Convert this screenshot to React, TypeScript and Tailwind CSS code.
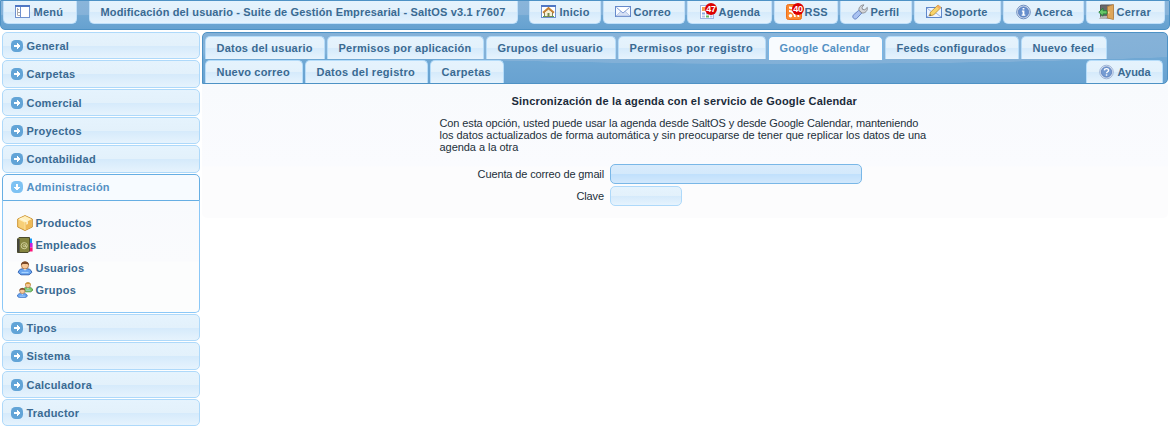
import type { ReactNode } from "react";

const glossLight =
  "bg-[linear-gradient(to_bottom,#e5f3fd_0,#e3f1fb_50%,#d5eafb_51%,#e6f3fd_100%)]";

function Svg({ children, className = "" }: { children: ReactNode; className?: string }) {
  return (
    <svg viewBox="0 0 16 16" className={`h-4 w-4 shrink-0 ${className}`} aria-hidden="true">
      {children}
    </svg>
  );
}

const Frame = ({ children, h = 12 }: { children?: ReactNode; h?: number }) => (
  <>
    <rect x=".5" y="1.5" width="14" height={h} fill="#fff" stroke="#6f91cf" />
    {children}
  </>
);

const MenuIcon = () => (
  <Svg>
    <Frame>
      <path d="M0 2h15" stroke="#4f77c4" strokeWidth="2" />
      <path d="M5.5 3v10" stroke="#6f91cf" />
      <path d="M2.5 4v7.5M2.5 5.5H4M3 8.5h2M3 11.5h2" stroke="#aaa" fill="none" />
    </Frame>
  </Svg>
);
const HomeIcon = () => (
  <Svg>
    <Frame>
      <path d="M0 2h15" stroke="#4f77c4" strokeWidth="2" />
      <path d="M3.5 8 7.5 5l4 3v4.5h-8z" fill="#f7f1d5" stroke="#888059" />
      <path d="M2 8.7 7.5 4 13 8.7" fill="none" stroke="#c78335" strokeWidth="1.8" />
      <path d="M6.5 9h2v4h-2z" fill="#768c4c" />
      <path d="M2 12.5h3M10 12.5h3" stroke="#5b9e4b" />
    </Frame>
  </Svg>
);
const MailIcon = () => (
  <Svg>
    <rect x=".5" y="2.5" width="15" height="10" fill="#f7faff" stroke="#6589cb" />
    <path d="m1 12 5.2-5L8 8.5 9.8 7l5.2 5z" fill="#d7e1f5" stroke="#9fb3db" strokeWidth=".7" />
    <path d="m1.5 3.5 6.5 5.5 6.5-5.5" fill="#fff" stroke="#819cd5" />
  </Svg>
);
const CalendarIcon = () => (
  <Svg>
    <rect x=".5" y="1.5" width="13" height="13" fill="#fff" stroke="#9fb4e0" />
    <path d="M2 3h3.5v4H2z" fill="#f59b51" />
    <path d="M2 9.5h3M6 9.5h3M10 9.5h2.5" stroke="#8ba8dd" strokeWidth="2" />
    <path d="M6 6h3M10 6h2.5M2 12.5h3M10 12.5h2.5" stroke="#b5c6e9" strokeWidth="2" />
    <path d="M6 12.5h3" stroke="#61b868" strokeWidth="2" />
  </Svg>
);
const RssIcon = () => (
  <Svg>
    <rect x=".5" y=".5" width="15" height="15" rx="2" fill="#fb8a30" stroke="#f0701a" />
    <circle cx="4.5" cy="11.7" r="1.8" fill="#fff" />
    <path d="M3 7a6 6 0 0 1 6 6M3 3.5a9.5 9.5 0 0 1 9.5 9.5" stroke="#fff" strokeWidth="1.8" fill="none" />
  </Svg>
);
const WrenchIcon = () => (
  <Svg>
    <path d="M1.2 11.2 6.8 6.2l3 2.8-5.3 5.7c-2.1 1.3-4.7-1.2-3.3-3.5z" fill="#a9c2f1" stroke="#6787c7" />
    <path d="M7 6.2C6.5 3.5 8.8.8 12 .9L10 3.2l.5 2.2 2.3.4 2.5-2.4c.6 3.2-2.1 6-5.3 5.6z" fill="#d4d6d9" stroke="#8d9197" />
  </Svg>
);
const EditMailIcon = () => (
  <Svg>
    <rect x=".5" y="3.5" width="15" height="10" fill="#edf4ff" stroke="#5f87cb" />
    <path d="m1 13 5-4h4l5 4M1 4l6 5" stroke="#9eb7df" fill="none" />
    <path d="m3.5 11.8 1-3.6L12 1l3 2.5-7.5 7.5z" fill="#f8d46c" stroke="#bd8b27" strokeWidth=".8" />
    <path d="m10.5 2.5 3 2.7L15 3.5 12 1z" fill="#f6ab63" />
    <path d="m3.5 11.8.5-1.6 1.3 1.1z" fill="#443" />
  </Svg>
);
const RoundIcon = ({ help = false }: { help?: boolean }) => (
  <Svg>
    <circle cx="7.5" cy="8" r="6.8" fill="#dce6f5" stroke={help ? "#9ab0d3" : "#6485b9"} strokeWidth=".9" />
    <circle cx="7.5" cy="8" r="5.2" fill={help ? "#759bd2" : "#668fce"} stroke="#5479b6" strokeWidth=".7" />
    {help ? (
      <>
        <path d="M5.4 6.4c.1-2.5 4.2-2.3 4.2 0 0 1.4-2 1.3-2 2.8" fill="none" stroke="#fff" strokeWidth="1.4" />
        <path d="M6.8 10.3h1.5v1.4H6.8z" fill="#fff" />
      </>
    ) : (
      <path d="M6.6 4h1.8v1.6H6.6zM5.9 6.6h2.5v4h.9v1.2H5.7v-1.2h.9V7.8h-.7z" fill="#fff" />
    )}
  </Svg>
);
const ExitIcon = () => (
  <Svg>
    <path d="M2.5 1h12.5v13H2.5z" fill="#68676a" stroke="#57575b" />
    <path d="M3 12h7l-2 3H1z" fill="#b5b5b5" />
    <path d="M9.5 2.5 15.5.5v15l-6-1.5z" fill="#dda65a" stroke="#b57e3c" strokeWidth=".8" />
    <path d="M10.8 7.5v2" stroke="#fff3bd" />
    <path d="M.8 8.2 5 4.2v2.5h4v3.2H5v2.3z" fill="#68c667" stroke="#25803a" strokeWidth=".9" />
  </Svg>
);
const BoxIcon = () => (
  <Svg>
    <path d="M8 .6 15.3 4v8L8 15.5.7 12V4z" fill="#f7cf77" stroke="#cd9433" />
    <path d="m1.2 4.2 6.8 3.5 6.8-3.5L8 1z" fill="#fff0bd" />
    <path d="M8 7.7v7.2l6.7-3.1V4.3z" fill="#efb957" />
    <path d="m4 2.7 7 3.5V9l-1.8.8V7L2.5 3.6z" fill="#fff9dd" opacity=".8" />
    <path d="M8 7.5V15" stroke="#fbe2a0" />
  </Svg>
);
const AddressBookIcon = () => (
  <Svg>
    <path d="M12 1.5h3v4.5h-3z" fill="#1698f8" />
    <path d="M12 6h3.6v4.5H12z" fill="#c721e0" />
    <path d="M12 10.5h3.6v4H12z" fill="#fb1479" />
    <path d="M.5 2 2 .5h10.5V14L11 15.5H.5z" fill="#85853f" stroke="#4a4b2d" />
    <path d="M1.6 2v13" stroke="#454540" strokeWidth="2" />
    <circle cx="7.2" cy="8.7" r="3.1" fill="none" stroke="#d7d6a2" strokeWidth=".9" />
    <circle cx="7.2" cy="8.7" r="1.1" fill="none" stroke="#d7d6a2" strokeWidth=".8" />
    <path d="M8.5 7.5v2.2H10" fill="none" stroke="#d7d6a2" strokeWidth=".8" />
  </Svg>
);
const Person = ({ hair = "#7b4927", shirt = "#68a5f0", edge = "#2b5eaf" }) => (
  <>
    <path d="M1.2 12.5C1.5 9.6 4 8.5 8 8.5s6.5 1.1 6.8 4L12 14.8H4z" fill={shirt} stroke={edge} strokeWidth=".9" />
    <path d="M4.5 12.5h7" stroke="#a8d4ff" strokeWidth="1.2" fill="none" />
    <path d="M6.3 9 8 10.6 9.7 9z" fill="#fff" />
    <circle cx="8" cy="5.4" r="3.6" fill="#f7c898" stroke="#98613a" strokeWidth=".7" />
    <path d="M4 5.6C3.3 0 12.7 0 12 5.6L10.5 4h-5z" fill={hair} />
  </>
);
const UserIcon = () => (
  <Svg>
    <Person />
  </Svg>
);
const GroupIcon = () => (
  <Svg>
    <g transform="translate(5.2 -.8) scale(.72)">
      <Person hair="#d09a34" shirt="#7cc763" edge="#36822f" />
    </g>
    <g transform="translate(-.6 4.9) scale(.74)">
      <Person />
    </g>
  </Svg>
);

function Arrow({ down = false }: { down?: boolean }) {
  return (
    <svg viewBox="0 0 12 12" className="h-3 w-3 shrink-0" aria-hidden="true">
      <rect width="12" height="12" rx="4.5" fill={down ? "#7ec2f3" : "#62a4d7"} />
      <path
        d="M3 5h3V3h1v1h1v1h1v2H8v1H7v1H6V7H3z"
        fill="#fff"
        transform={down ? "rotate(90 6 6)" : undefined}
      />
    </svg>
  );
}

type BarItem = { label: string; box: string; icon: ReactNode; badge?: string };

const actions: BarItem[] = [
  { label: "Inicio", box: "w-[72px] pl-[11px]", icon: <HomeIcon /> },
  { label: "Correo", box: "w-[82px] pl-[11px]", icon: <MailIcon /> },
  { label: "Agenda", box: "w-[85px] pl-3", icon: <CalendarIcon />, badge: "47" },
  { label: "RSS", box: "w-[64px] pl-[11px]", icon: <RssIcon />, badge: "40" },
  { label: "Perfil", box: "w-[72px] pl-[11px]", icon: <WrenchIcon /> },
  { label: "Soporte", box: "w-[87px] pl-[11px]", icon: <EditMailIcon /> },
  { label: "Acerca", box: "w-[81px] pl-3", icon: <RoundIcon /> },
  { label: "Cerrar", box: "w-[79px] pl-[11px]", icon: <ExitIcon /> },
];

function BarButton({ label, box, icon, badge }: BarItem) {
  return (
    <button
      className={`relative flex h-[23px] shrink-0 items-center gap-[2.5px] rounded-b-[5px] border border-t-0 border-[#c0e0fa] text-left ${glossLight} ${box}`}
    >
      {icon}
      <span>{label}</span>
      {badge && (
        <span className="absolute top-[2px] left-[17px] flex h-3 w-3 items-center justify-center rounded-full bg-[#dc0000] text-[9px] leading-none tracking-[-0.2px] text-white">
          {badge}
        </span>
      )}
    </button>
  );
}

type TabItem = { label: string; box: string; active?: boolean };

const firstRow: TabItem[] = [
  { label: "Datos del usuario", box: "w-[120px]" },
  { label: "Permisos por aplicación", box: "w-[157px] tracking-[0.25px]" },
  { label: "Grupos del usuario", box: "w-[130px] tracking-[0.25px]" },
  { label: "Permisos por registro", box: "w-[148px] tracking-[0.45px]" },
  { label: "Google Calendar", box: "w-[115px] tracking-[0.17px]", active: true },
  { label: "Feeds configurados", box: "w-[134px] tracking-[0.28px]" },
  { label: "Nuevo feed", box: "w-[86px] tracking-[0.25px]" },
];
const secondRow: TabItem[] = [
  { label: "Nuevo correo", box: "w-[98px] tracking-[0.2px]" },
  { label: "Datos del registro", box: "w-[123px] tracking-[0.28px]" },
  { label: "Carpetas", box: "w-[74px] tracking-[0.3px]" },
];

function Tab({ label, box, active }: TabItem) {
  return (
    <button
      className={`shrink-0 rounded-t-[5px] border border-b-0 pl-[10.5px] text-left ${box} ${
        active
          ? "h-6 border-[#79b7e7] bg-[#f8fbfe] pb-px text-[#5491c4]"
          : `h-[23px] border-[#b5dcf9] ${glossLight}`
      }`}
    >
      {label}
    </button>
  );
}

type Section = { label: string; height: string };

const upper: Section[] = [
  { label: "General", height: "h-[27px]" },
  { label: "Carpetas", height: "h-[28px]" },
  { label: "Comercial", height: "h-[27px]" },
  { label: "Proyectos", height: "h-[27px]" },
  { label: "Contabilidad", height: "h-[28px]" },
];
const lower: Section[] = [
  { label: "Tipos", height: "h-[27px]" },
  { label: "Sistema", height: "h-[28px]" },
  { label: "Calculadora", height: "h-[27px]" },
  { label: "Traductor", height: "h-[27px]" },
];

function AccordionHeader({ label, height }: Section) {
  return (
    <button
      className={`flex w-full shrink-0 items-center gap-[3.5px] rounded-[5px] border border-[#aed9fa] pl-2 text-left ${height} ${glossLight}`}
    >
      <Arrow />
      <span>{label}</span>
    </button>
  );
}

const adminLinks = [
  { label: "Productos", icon: <BoxIcon />, height: "h-[22px]" },
  { label: "Empleados", icon: <AddressBookIcon />, height: "h-[22px]" },
  { label: "Usuarios", icon: <UserIcon />, height: "h-[23px]" },
  { label: "Grupos", icon: <GroupIcon />, height: "h-[22px]" },
];

export default function App() {
  return (
    <div className="flex h-[442px] w-[1170px] flex-col overflow-hidden bg-white font-['Liberation_Sans',Arial,sans-serif] text-[11px] leading-[12px] font-bold tracking-[0.23px] whitespace-nowrap text-[#3a6a92]">
      <header className="flex h-[30px] shrink-0 rounded-b-[5px] border border-[#4e92c5] bg-[linear-gradient(to_bottom,#8ab5da_0,#85b2d9_48%,#70a8d4_52%,#66a1d0_100%)] pl-[2px]">
        <BarButton label="Menú" box="w-[74px] pl-[11px]" icon={<MenuIcon />} />
        <h1
          className={`mr-[11px] ml-3 flex h-[23px] w-[429px] items-center rounded-b-[5px] border border-t-0 border-[#c0e0fa] pl-[10.5px] tracking-[0.15px] ${glossLight}`}
        >
          Modificación del usuario - Suite de Gestión Empresarial - SaltOS v3.1 r7607
        </h1>
        <nav className="flex gap-[2px]">
          {actions.map((a) => (
            <BarButton key={a.label} {...a} />
          ))}
        </nav>
      </header>

      <div className="flex flex-1 gap-[2px] pt-[2px] pl-[2px]">
        <aside className="flex w-[198px] flex-col gap-px">
          {upper.map((s) => (
            <AccordionHeader key={s.label} {...s} />
          ))}
          <section className="flex h-[139px] shrink-0 flex-col">
            <button className="flex h-[27px] items-center gap-[3.5px] rounded-t-[5px] border border-[#66aee3] bg-[#f7fbff] pb-px pl-2 text-left text-[#5491c4]">
              <Arrow down />
              <span>Administración</span>
            </button>
            <ul className="flex-1 rounded-b-[5px] border border-t-0 border-[#8bc8f7] bg-[linear-gradient(to_bottom,#f8fafd_0,#fafbfd_54%,#fcfdfd_55%)] pt-[11px] pl-[14px]">
              {adminLinks.map((l) => (
                <li key={l.label} className={`flex items-center gap-[2.5px] ${l.height}`}>
                  {l.icon}
                  <span>{l.label}</span>
                </li>
              ))}
            </ul>
          </section>
          {lower.map((s) => (
            <AccordionHeader key={s.label} {...s} />
          ))}
        </aside>

        <main className="w-[966px]">
          <div className="flex h-[52px] flex-col rounded-[5px] rounded-bl-none border border-[#4e92c5] bg-[radial-gradient(ellipse_620px_31px_at_60%_0,#8ab5da_0,#82b0d7_99%,transparent_100%),linear-gradient(to_bottom,#8ab5da_0,#80b0d8_40%,#70a8d4_50%,#68a2d1_100%)] pt-[3px] pl-[2px]">
            <div className="flex h-6 gap-[2px]">
              {firstRow.map((t) => (
                <Tab key={t.label} {...t} />
              ))}
            </div>
            <div className="flex gap-[2px]">
              {secondRow.map((t) => (
                <Tab key={t.label} {...t} />
              ))}
              <button
                className={`mr-1 ml-auto flex h-[23px] w-[77px] items-center gap-[2.5px] rounded-t-[5px] border border-b-0 border-[#b5dcf9] pl-3 tracking-normal ${glossLight}`}
              >
                <RoundIcon help />
                <span>Ayuda</span>
              </button>
            </div>
          </div>

          <section className="h-[134px] rounded-b-[5px] bg-[linear-gradient(to_bottom,#f8fafd_0,#fafbfe_61%,#fcfcfd_62%)] pt-[11px] font-normal text-[#222f3a]">
            <h2 className="pl-[309.5px] font-bold tracking-[0.18px] text-[#1b2b3a]">
              Sincronización de la agenda con el servicio de Google Calendar
            </h2>
            <p className="mt-[10px] flex flex-col pl-[237.5px]">
              <span className="tracking-[-0.12px]">
                Con esta opción, usted puede usar la agenda desde SaltOS y desde Google Calendar, manteniendo
              </span>
              <span className="tracking-[-0.025px]">
                los datos actualizados de forma automática y sin preocuparse de tener que replicar los datos de una
              </span>
              <span className="tracking-[-0.05px]">agenda a la otra</span>
            </p>
            <form className="mt-[11px] grid grid-cols-[402px_auto] items-center gap-x-[6px] gap-y-[2px]">
              <label htmlFor="account" className="text-right tracking-[-0.13px]">
                Cuenta de correo de gmail
              </label>
              <input
                id="account"
                className="h-5 w-[252px] rounded-[5px] border border-[#79b7e7] bg-[linear-gradient(to_bottom,#d8ebfc_0,#d4e9fb_49%,#c0e0fc_50%,#d2e8fc_100%)]"
              />
              <label htmlFor="password" className="text-right tracking-[-0.1px]">
                Clave
              </label>
              <input
                id="password"
                type="password"
                className={`h-5 w-[72px] rounded-[5px] border border-[#aed9fa] ${glossLight}`}
              />
            </form>
          </section>
        </main>
      </div>
    </div>
  );
}
